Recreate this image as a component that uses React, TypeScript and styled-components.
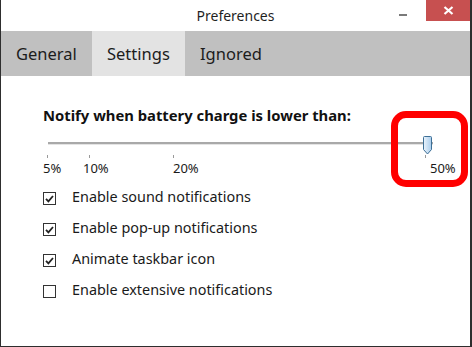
import { createGlobalStyle } from "styled-components";
import styled from "styled-components";

const GlobalStyle = createGlobalStyle`
  html, body {
    margin: 0;
    padding: 0;
    background: #ffffff;
  }
  body {
    font-family: "Noto Sans", "Open Sans", sans-serif;
    color: #1a1a1a;
  }
`;

const Window = styled.div`
  width: 472px;
  height: 347px;
  box-sizing: border-box;
  border: 1px solid #2e2e2e;
  border-top: none;
  border-right-width: 2px;
  display: flex;
  flex-direction: column;
  background: #ffffff;
  overflow: hidden;
`;

const TitleBar = styled.div`
  height: 31px;
  display: grid;
  grid-template-columns: 1fr auto 1fr;
  align-items: start;
`;

const Title = styled.div`
  font-size: 14px;
  line-height: 31px;
  color: #1f1f1f;
`;

const Controls = styled.div`
  justify-self: end;
  display: flex;
  align-items: flex-start;
`;

const MinButton = styled.div`
  width: 28px;
  height: 21px;
  display: flex;
  justify-content: center;
  align-items: center;
  margin-right: 9px;

  &::after {
    content: "";
    width: 8px;
    height: 2px;
    margin-top: 8px;
    background: #7a7a7a;
  }
`;

const CloseButton = styled.div`
  width: 44px;
  height: 21px;
  background: #c75050;
  display: flex;
  justify-content: center;
  align-items: center;
`;

const TabBar = styled.div`
  height: 45px;
  display: flex;
  background: #c0c0c0;
`;

const Tab = styled.div<{ $active?: boolean; $w: number }>`
  width: ${(p) => p.$w}px;
  padding-left: 15px;
  box-sizing: border-box;
  font-size: 16.5px;
  line-height: 45px;
  color: #1c1c1c;
  background: ${(p) => (p.$active ? "#e3e3e3" : "transparent")};
`;

const Content = styled.div`
  flex: 1;
  padding: 29px 0 0 42px;
  display: flex;
  flex-direction: column;
`;

const Heading = styled.div`
  font-size: 14.8px;
  font-weight: 700;
  line-height: 20px;
  color: #111111;
`;

const SliderArea = styled.div`
  position: relative;
  height: 44px;
  margin-top: 9px;
`;

const Track = styled.div`
  position: absolute;
  left: 5px;
  top: 8px;
  width: 385px;
  height: 2px;
  background: #a9a9a9;
  border-bottom: 1px solid #e4e4e4;
`;

const Tick = styled.div`
  position: absolute;
  top: 21px;
  width: 1px;
  height: 3px;
  background: #9a9a9a;
`;

const TickLabel = styled.div`
  position: absolute;
  top: 27px;
  font-size: 13px;
  line-height: 15px;
  color: #1a1a1a;
`;

const Thumb = styled.svg`
  position: absolute;
  left: 379px;
  top: 2px;
`;

const Highlight = styled.div`
  position: absolute;
  left: 348px;
  top: -23px;
  width: 77px;
  height: 76px;
  box-sizing: border-box;
  border: 7px solid #ff0000;
  border-radius: 15px;
`;

const Options = styled.div`
  display: flex;
  flex-direction: column;
  gap: 12px;
  margin-top: 9px;
`;

const Option = styled.div`
  display: flex;
  align-items: center;
  gap: 16px;
  height: 19px;
`;

const Box = styled.div`
  width: 13px;
  height: 13px;
  box-sizing: border-box;
  border: 1px solid #333333;
  background: #ffffff;
  display: flex;
  justify-content: center;
  align-items: center;
  margin-top: 4px;
`;

const OptionLabel = styled.div`
  font-size: 14.4px;
  line-height: 19px;
  color: #1a1a1a;
`;

const ticks = [
  { value: 5, label: "5%", dx: -4 },
  { value: 10, label: "10%", dx: -6 },
  { value: 20, label: "20%", dx: 0 },
  { value: 50, label: "50%", dx: 5 },
];

const options = [
  { label: "Enable sound notifications", checked: true },
  { label: "Enable pop-up notifications", checked: true },
  { label: "Animate taskbar icon", checked: true },
  { label: "Enable extensive notifications", checked: false },
];

const tickX = (v: number) => 4 + (v - 5) * 8.4;

export default function App() {
  return (
    <>
      <GlobalStyle />
      <Window>
        <TitleBar>
          <div />
          <Title>Preferences</Title>
          <Controls>
            <MinButton />
            <CloseButton>
              <svg width="11" height="9" viewBox="0 0 11 9">
                <path d="M1.5 1 L9.5 8 M9.5 1 L1.5 8" stroke="#ffffff" strokeWidth="2.2" />
              </svg>
            </CloseButton>
          </Controls>
        </TitleBar>
        <TabBar>
          <Tab $w={91}>General</Tab>
          <Tab $w={93} $active>
            Settings
          </Tab>
          <Tab $w={100}>Ignored</Tab>
        </TabBar>
        <Content>
          <Heading>Notify when battery charge is lower than:</Heading>
          <SliderArea>
            <Track />
            {ticks.map((t) => (
              <Tick key={t.value} style={{ left: Math.round(tickX(t.value)) }} />
            ))}
            {ticks.map((t) => (
              <TickLabel key={t.label} style={{ left: Math.round(tickX(t.value)) + t.dx }}>
                {t.label}
              </TickLabel>
            ))}
            <Thumb width="11" height="19" viewBox="0 0 11 19">
              <defs>
                <linearGradient id="thumbFill" x1="0" y1="0" x2="1" y2="0">
                  <stop offset="0" stopColor="#eaf3fb" />
                  <stop offset="1" stopColor="#a9cdec" />
                </linearGradient>
              </defs>
              <path
                d="M1.5 1.5 Q1.5 0.5 2.5 0.5 L8.5 0.5 Q9.5 0.5 9.5 1.5 L9.5 13.5 L5.5 18 L1.5 13.5 Z"
                fill="url(#thumbFill)"
                stroke="#3d6f96"
                strokeWidth="1"
              />
            </Thumb>
            <Highlight />
          </SliderArea>
          <Options>
            {options.map((o) => (
              <Option key={o.label}>
                <Box>
                  {o.checked && (
                    <svg width="9" height="8" viewBox="0 0 9 8">
                      <path d="M1 3.8 L3.4 6.3 L8 1" stroke="#222222" strokeWidth="1.8" fill="none" />
                    </svg>
                  )}
                </Box>
                <OptionLabel>{o.label}</OptionLabel>
              </Option>
            ))}
          </Options>
        </Content>
      </Window>
    </>
  );
}
